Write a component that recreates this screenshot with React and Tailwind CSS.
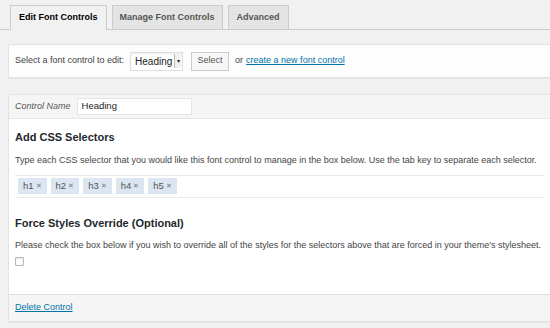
import { useState } from "react";

const tags = ["h1", "h2", "h3", "h4", "h5"];

export default function App() {
  const [force, setForce] = useState(false);

  return (
    <div className="min-h-screen w-[550px] overflow-hidden bg-[#f1f1f1] font-['Liberation_Sans',Arial,sans-serif] text-[9px] text-[#444]">
      {/* Tabs */}
      <div className="flex items-end gap-[5px] border-b border-[#ccc] pl-[10px] pt-[5px] h-[30px]">
        <div className="-mb-px h-[25px] px-[8px] flex items-center border border-b-0 border-[#ccc] bg-[#f1f1f1] text-[9px] font-semibold text-[#000]">
          Edit Font Controls
        </div>
        <div className="h-[24px] px-[7px] flex items-center border border-b-0 border-[#ccc] bg-[#e4e4e4] text-[9px] font-semibold text-[#555]">
          Manage Font Controls
        </div>
        <div className="h-[24px] px-[8px] flex items-center border border-b-0 border-[#ccc] bg-[#e4e4e4] text-[9px] font-semibold text-[#555]">
          Advanced
        </div>
      </div>

      {/* Select bar */}
      <div className="ml-[8px] mt-[14px] h-[34px] bg-[#fdfdfd] border border-r-0 border-[#e2e2e2] shadow-[0_1px_1px_rgba(0,0,0,0.04)] flex items-center pl-[6px]">
        <span>Select a font control to edit:</span>
        <div className="ml-[6px] h-[19px] w-[53px] border border-[#ddd] bg-white shadow-[inset_0_1px_2px_rgba(0,0,0,0.07)] flex items-center pl-[4px] text-[10px] text-[#222]">
          Heading
          <span className="ml-auto mr-[1px] h-[14px] w-[7px] bg-[#f0f0f0] border-l border-[#bbb] flex items-center justify-center text-[6px]">▾</span>
        </div>
        <button className="ml-[8px] h-[19px] w-[38px] border border-[#ccc] bg-[#f7f7f7] text-[9px] text-[#555]">
          Select
        </button>
        <span className="ml-[6px]">or</span>
        <a href="#" className="ml-[3px] text-[#0073aa] underline">
          create a new font control
        </a>
      </div>

      {/* Main panel */}
      <div className="ml-[8px] mt-[16px] bg-white border border-r-0 border-[#e2e2e2] shadow-[0_1px_1px_rgba(0,0,0,0.04)]">
        <div className="h-[24px] bg-[#f5f5f5] border-b border-[#e5e5e5] flex items-center pl-[6px]">
          <span className="italic text-[#555]">Control Name</span>
          <div className="ml-[6px] h-[17px] w-[115px] bg-white border border-[#e5e5e5] flex items-center pl-[4px] text-[9.5px] text-[#222]">
            Heading
          </div>
        </div>

        <div className="px-[6px]">
          <h3 className="mt-[10px] text-[11px] font-semibold text-[#23282d]">Add CSS Selectors</h3>
          <p className="mt-[8px] leading-[12px]">
            Type each CSS selector that you would like this font control to manage in the box below. Use the tab key to separate each selector.
          </p>
          <div className="mt-[9px] h-[23px] border-y border-[#e8e8e8] flex items-center gap-[4px] pl-[3px]">
            {tags.map((t) => (
              <span key={t} className="h-[16px] px-[5px] bg-[#dbe6f2] flex items-center gap-[2px] text-[9.5px] text-[#555]">
                {t}
                <span className="text-[7px] text-[#777]">✕</span>
              </span>
            ))}
          </div>

          <h3 className="mt-[17px] text-[11px] font-semibold text-[#23282d]">Force Styles Override (Optional)</h3>
          <p className="mt-[8px] leading-[12px]">
            Please check the box below if you wish to override all of the styles for the selectors above that are forced in your theme's stylesheet.
          </p>
          <button
            onClick={() => setForce(!force)}
            className="mt-[6px] block h-[9px] w-[9px] rounded-[1px] border border-[#b4b9be] bg-white shadow-[inset_0_1px_2px_rgba(0,0,0,0.1)]"
          />
          <div className="h-[28px]" />
        </div>

        <div className="h-[27px] bg-[#f5f5f5] border-t border-[#dedede] flex items-center pl-[6px]">
          <a href="#" className="text-[#0073aa] underline">Delete Control</a>
        </div>
      </div>
    </div>
  );
}
